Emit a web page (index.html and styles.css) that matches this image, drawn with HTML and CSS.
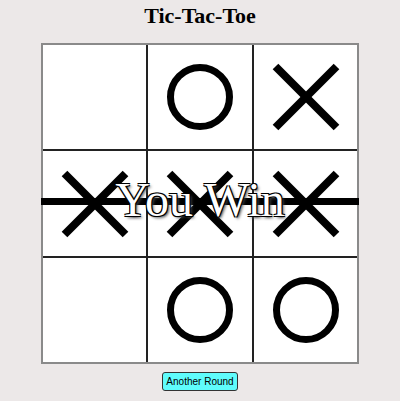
FILE: index.html
```html
<!DOCTYPE html>
<html>
<head>
<meta charset="utf-8">
<link rel="stylesheet" href="styles.css">
</head>
<body>
<main class="game">
  <h1 class="title">Tic-Tac-Toe</h1>
  <div class="board">
    <div class="cell"></div>
    <div class="cell"><svg class="mark" viewBox="0 0 100 100"><circle cx="50" cy="50" r="29.5"/></svg></div>
    <div class="cell"><svg class="mark" viewBox="0 0 100 100"><line x1="19.5" y1="19.5" x2="80.5" y2="80.5"/><line x1="80.5" y1="19.5" x2="19.5" y2="80.5"/></svg></div>
    <div class="cell"><svg class="mark" viewBox="0 0 100 100"><line x1="19.5" y1="19.5" x2="80.5" y2="80.5"/><line x1="80.5" y1="19.5" x2="19.5" y2="80.5"/></svg></div>
    <div class="cell"><svg class="mark" viewBox="0 0 100 100"><line x1="19.5" y1="19.5" x2="80.5" y2="80.5"/><line x1="80.5" y1="19.5" x2="19.5" y2="80.5"/></svg></div>
    <div class="cell"><svg class="mark" viewBox="0 0 100 100"><line x1="19.5" y1="19.5" x2="80.5" y2="80.5"/><line x1="80.5" y1="19.5" x2="19.5" y2="80.5"/></svg></div>
    <div class="cell"></div>
    <div class="cell"><svg class="mark" viewBox="0 0 100 100"><circle cx="50" cy="50" r="29.5"/></svg></div>
    <div class="cell"><svg class="mark" viewBox="0 0 100 100"><circle cx="50" cy="50" r="29.5"/></svg></div>
    <div class="win-line"></div>
    <div class="win-text">You Win</div>
  </div>
  <button class="again">Another Round</button>
</main>
</body>
</html>
```
FILE: styles.css
```css
html, body {
  margin: 0;
  padding: 0;
  background: #ece8e8;
}
.game {
  display: flex;
  flex-direction: column;
  align-items: center;
}
.title {
  margin: 0;
  font-family: "Liberation Serif", serif;
  font-weight: bold;
  font-size: 22px;
  line-height: 31px;
  color: #000;
}
.board {
  position: relative;
  margin-top: 12px;
  display: grid;
  grid-template-columns: 103px 104px 103px;
  grid-template-rows: 104px 105px 104px;
  gap: 2px;
  border: 2px solid #8a8a8a;
  background: #222;
}
.cell {
  background: #fff;
  display: flex;
  align-items: center;
  justify-content: center;
}
.mark {
  width: 100px;
  height: 100px;
}
.mark line {
  stroke: #000;
  stroke-width: 8;
}
.mark circle {
  fill: none;
  stroke: #000;
  stroke-width: 7;
}
.win-line {
  position: absolute;
  left: -2px;
  right: -2px;
  top: 153px;
  height: 7px;
  background: #000;
}
.win-text {
  position: absolute;
  left: 0;
  right: 0;
  top: 131px;
  text-align: center;
  font-family: "Liberation Serif", serif;
  font-size: 48px;
  line-height: 48px;
  color: #fff;
  text-shadow: 1px 1px 0 #000, -1px -1px 0 #000, 1px -1px 0 #000, -1px 1px 0 #000, 2px 2px 3px #444;
}
.again {
  margin-top: 8px;
  height: 19px;
  padding: 0 3px;
  font-family: "Liberation Sans", Arial, sans-serif;
  font-size: 10px;
  color: #000;
  background: #5ffcfc;
  border: 1px solid #333;
  border-radius: 3px;
}
```
